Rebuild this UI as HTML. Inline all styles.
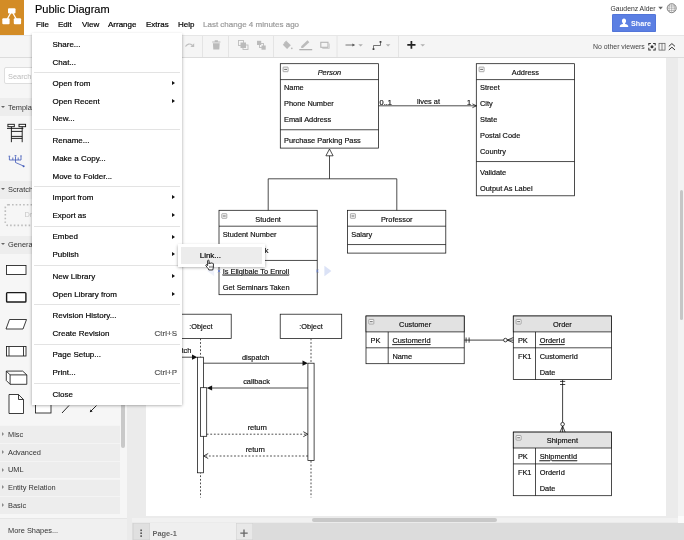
<!DOCTYPE html>
<html>
<head>
<meta charset="utf-8">
<title>Public Diagram</title>
<style>
html,body{margin:0;padding:0;}
#root{position:absolute;left:0;top:0;width:684px;height:540px;will-change:transform;overflow:hidden;}
body{width:684px;height:540px;position:relative;overflow:hidden;background:#fff;font-family:"Liberation Sans",sans-serif;color:#000;}
.abs{position:absolute;}
#logo{left:0;top:0;width:23.8px;height:35.5px;background:#d38c26;}
#title{left:35px;top:1px;font-size:11px;line-height:16px;color:#000;-webkit-text-stroke:0.15px;white-space:nowrap;}
#menubar{left:0;top:18px;height:13px;font-size:8px;line-height:13px;white-space:nowrap;color:#000;-webkit-text-stroke:0.2px;}
#menubar span{position:absolute;top:0;}
#toolbar{left:0;top:35px;width:684px;height:21px;background:#f5f5f5;border-top:1px solid #e6e6e6;border-bottom:1px solid #dcdcdc;}
#sidebar{left:0;top:58px;width:126.5px;height:482px;background:#f6f6f6;}
#canvas{left:132px;top:58px;width:552px;height:465px;background:#ebebeb;}
#page{left:146px;top:58px;width:520px;height:458px;background:#fff;}
#tabs{left:132px;top:523px;width:552px;height:17px;background:#dcdcdc;}
.sect{position:absolute;left:0;width:120px;height:17px;background:#ededed;font-size:7.4px;line-height:17px;color:#333;white-space:nowrap;}
.sect span{position:absolute;left:8px;top:0.6px;}
#menu{left:32px;top:33px;width:150px;height:372px;background:#fff;box-shadow:0 0.5px 3px rgba(0,0,0,.38);font-size:8px;color:#000;-webkit-text-stroke:0.18px #000;}
#menu .it{position:absolute;left:20.5px;white-space:nowrap;line-height:12px;}
#menu .sc{position:absolute;right:5px;white-space:nowrap;line-height:12px;color:#888;}
#menu .sep{position:absolute;left:2px;width:146px;height:1.3px;background:#e3e3e3;}
#menu .ar{position:absolute;left:139.8px;width:0;height:0;border-left:3.3px solid #111;border-top:2.8px solid transparent;border-bottom:2.8px solid transparent;}
#submenu{left:178.2px;top:243.7px;width:87px;height:23.3px;background:#fff;box-shadow:0 0.5px 3px rgba(0,0,0,.38);-webkit-text-stroke:0.18px #000;}
#submenu div{position:absolute;left:3px;top:3px;width:81px;height:17.5px;background:#ececec;font-size:8px;line-height:17.5px;}
#submenu span{position:absolute;left:18.5px;top:0.3px;}
svg text{font-family:"Liberation Sans",sans-serif;stroke:#111;stroke-width:0.18px;}

.sect i.td{position:absolute;left:1.300px;top:7.800px;width:0;height:0;border-top:2.800px solid #666;border-left:2.300px solid transparent;border-right:2.300px solid transparent;}
.sect i.tr{position:absolute;left:1.600px;top:6.800px;width:0;height:0;border-left:2.800px solid #888;border-top:2.300px solid transparent;border-bottom:2.300px solid transparent;}
</style>
</head>
<body>
<div id="root">
<div id="hdr" class="abs" style="left:0;top:0;width:684px;height:35px;background:#fff;"></div>
<div id="logo" class="abs"></div>
<svg class="abs" style="left:0;top:0" width="24" height="35" viewBox="0 0 24 35"><path d="M11.800 11l-5.600 10M11.800 11l5.500 10" stroke="#fff" stroke-width="1.300" fill="none"/><rect x="8" y="8.200" width="7.500" height="5.200" rx="1" fill="#fff"/><rect x="2.300" y="18.300" width="7.300" height="5.900" rx="1" fill="#fff"/><rect x="13.800" y="18.300" width="7.300" height="5.900" rx="1" fill="#fff"/></svg>
<div id="title" class="abs">Public Diagram</div>
<div id="menubar" class="abs">
<span style="left:36px">File</span><span style="left:58px">Edit</span><span style="left:82px">View</span><span style="left:108px">Arrange</span><span style="left:146px">Extras</span><span style="left:178px">Help</span><span style="left:203px;color:#9a9a9a">Last change 4 minutes ago</span>
</div>
<div id="toolbar" class="abs"></div>

<!-- header right -->
<div class="abs" style="left:610.500px;top:3.600px;font-size:6.800px;line-height:10px;color:#333;white-space:nowrap;">Gaudenz Alder</div>
<svg class="abs" style="left:656px;top:2px" width="26" height="14" viewBox="656 2 26 14">
<path d="M658.3 6.8h4.6l-2.3 2.8z" fill="#666"/>
<circle cx="671.7" cy="8.2" r="4.5" fill="#fff" stroke="#777" stroke-width="0.9"/>
<path d="M667.2 8.2h9M671.7 3.7v9M668 6h7.4M668 10.4h7.4M669.8 4.2c-1 2.6-1 5.4 0 8M673.6 4.2c1 2.6 1 5.4 0 8" fill="none" stroke="#8a8a8a" stroke-width="0.55"/>
</svg>
<div class="abs" style="left:612px;top:14px;width:44px;height:18px;background:#5b7fe3;border-radius:1.5px;box-shadow:inset 0 0 0 0.5px #4a6cd0;"></div>
<svg class="abs" style="left:618px;top:17px" width="12" height="12" viewBox="0 0 12 12"><path d="M6 1.6c1.3 0 2.1 1 2.1 2.3 0 1-.4 1.800-1 2.300v.7c1.700.4 3.100 1 3.100 2.200v.9H1.800v-.9c0-1.200 1.400-1.800 3.100-2.200v-.7c-.6-.5-1-1.300-1-2.300 0-1.300.8-2.300 2.100-2.300z" fill="#fff"/></svg>
<div class="abs" style="left:631px;top:17.600px;font-size:7.2px;font-weight:bold;line-height:12px;color:#fff;white-space:nowrap;">Share</div>

<!-- toolbar icons -->
<svg class="abs" style="left:180px;top:36px" width="504" height="21" viewBox="180 36 504 21">
<g stroke="#e4e4e4" stroke-width="1"><path d="M202.500 36v21M228.500 36v21M273.500 36v21M337 36v21M398.500 36v21"/></g>
<!-- redo -->
<path d="M185.500 46.500c1.500-2.800 4.500-3.300 6.800-1.200" fill="none" stroke="#bdbdbd" stroke-width="1.200"/><path d="M194.200 43.200v3.800h-3.800z" fill="#bdbdbd"/>
<!-- trash -->
<path d="M212.200 41.400h8.200v1.200h-8.200zM214.700 40.200h3.200v1.300h-3.200zM212.900 43.200h6.800l-.4 6.200h-6z" fill="#bbbbbb"/>
<!-- to front -->
<g fill="none" stroke="#bdbdbd" stroke-width="0.900"><rect x="238.500" y="40.500" width="5" height="5"/><rect x="243" y="45" width="5" height="4.500"/></g><rect x="240.500" y="42.500" width="5.500" height="5.500" fill="#bbbbbb"/>
<!-- to back -->
<rect x="259.500" y="43.500" width="4" height="4" fill="none" stroke="#bdbdbd" stroke-width="0.900"/><rect x="257" y="40.800" width="4.200" height="4.200" fill="#bbbbbb"/><rect x="261.500" y="45.500" width="4.200" height="4.200" fill="#bbbbbb"/>
<!-- fill -->
<path d="M286.500 41l4.300 4.300-3.700 3.700-4.300-4.300z" fill="#bbbbbb"/><path d="M284 43.200l2.500-2.500" stroke="#bbbbbb" stroke-width="0.800"/><circle cx="291.800" cy="48.300" r="0.900" fill="#bbbbbb"/>
<!-- line -->
<path d="M301.200 46.200l6.300-5.900 1.800 1.900-6.300 5.900h-1.800z" fill="#bbbbbb"/><rect x="299.300" y="49" width="12.900" height="1.300" fill="#b0b0b0"/>
<!-- shadow -->
<rect x="320.800" y="42.300" width="7.200" height="5" fill="none" stroke="#b4b4b4" stroke-width="1.100"/><path d="M322.300 48.500h7v-5" fill="none" stroke="#cfcfcf" stroke-width="1"/>
<!-- arrow -->
<path d="M345.500 45h7.500" stroke="#555" stroke-width="0.800"/><path d="M355.200 45l-2.800-1.600v3.200z" fill="#555"/>
<path d="M358.300 44.200h4.600l-2.300 2.400z" fill="#b0b0b0"/>
<!-- waypoint -->
<path d="M373.500 49v-3.500h7V42" fill="none" stroke="#555" stroke-width="0.800"/><rect x="372.600" y="48.200" width="1.800" height="1.800" fill="#444"/><rect x="379.600" y="41" width="1.800" height="1.800" fill="#444"/>
<path d="M385.800 44.200h4.600l-2.300 2.400z" fill="#b0b0b0"/>
<!-- plus -->
<path d="M407.300 44.900h8.200M411.400 41v7.800" stroke="#222" stroke-width="1.700"/>
<path d="M420.400 44.200h4.600l-2.300 2.400z" fill="#b0b0b0"/>
<!-- right icons -->
<g fill="#333"><path d="M648.300 43h2.600v1h-1.600v1.600h-1zM655.700 43h-2.600v1h1.600v1.600h1zM648.300 50.400h2.600v-1h-1.600v-1.600h-1zM655.700 50.400h-2.600v-1h1.600v-1.600h1z"/><circle cx="652" cy="46.700" r="1.500"/></g>
<rect x="659" y="43.300" width="6" height="6.800" fill="none" stroke="#555" stroke-width="0.700"/><path d="M662 43.300v6.800" stroke="#555" stroke-width="0.700"/>
<path d="M668.800 46.400l3.100-2.800 3.100 2.800M668.800 50l3.100-2.800 3.100 2.800" fill="none" stroke="#333" stroke-width="1"/>
</svg>
<div class="abs" style="left:593px;top:41px;font-size:6.900px;line-height:11px;color:#444;white-space:nowrap;">No other viewers</div>
<div id="sidebar" class="abs"></div>

<!-- sidebar contents -->
<div class="abs" style="left:4px;top:67px;width:113px;height:16.500px;background:#fff;border:1px solid #dedede;border-radius:2px;box-sizing:border-box;"></div>
<div class="abs" style="left:8px;top:70.600px;font-size:7.4px;line-height:12px;color:#bbb;white-space:nowrap;">Search Shapes</div>
<div class="sect" style="top:98px;height:18px;line-height:18px"><i class="td"></i><span>Templates</span></div>
<div class="sect" style="top:180.500px;height:18px;line-height:18px"><i class="td"></i><span>Scratchpad</span></div>
<div class="sect" style="top:235.500px;height:18px;line-height:18px"><i class="td"></i><span>General</span></div>
<svg class="abs" style="left:3px;top:202px" width="118" height="27" viewBox="3 202 118 27"><rect x="5.300" y="204.800" width="110.500" height="20.600" rx="3" fill="none" stroke="#bdbdbd" stroke-width="1.600" stroke-dasharray="1.600 2.100"/></svg>
<div class="abs" style="left:24.500px;top:209px;font-size:7.4px;line-height:12px;color:#c6c6c6;white-space:nowrap;">Drag elements here</div>
<div class="sect" style="top:425.40px;height:17.700px;line-height:17.700px;box-shadow:inset 0 0.700px 0 #f6f6f6"><i class="tr"></i><span>Misc</span></div>
<div class="sect" style="top:443.10px;height:17.700px;line-height:17.700px;box-shadow:inset 0 0.700px 0 #f6f6f6"><i class="tr"></i><span>Advanced</span></div>
<div class="sect" style="top:460.80px;height:17.700px;line-height:17.700px;box-shadow:inset 0 0.700px 0 #f6f6f6"><i class="tr"></i><span>UML</span></div>
<div class="sect" style="top:478.50px;height:17.700px;line-height:17.700px;box-shadow:inset 0 0.700px 0 #f6f6f6"><i class="tr"></i><span>Entity Relation</span></div>
<div class="sect" style="top:496.20px;height:17.700px;line-height:17.700px;box-shadow:inset 0 0.700px 0 #f6f6f6"><i class="tr"></i><span>Basic</span></div>
<div class="abs" style="left:0;top:517.500px;width:126.500px;height:22.500px;background:#f0f0f0;border-top:0.700px solid #e6e6e6;box-sizing:border-box;"></div>
<div class="abs" style="left:8px;top:524.700px;font-size:7.4px;line-height:12px;color:#333;white-space:nowrap;">More Shapes...</div>
<div class="abs" style="left:121.300px;top:58px;width:3.600px;height:389.500px;background:#c9c9c9;border-radius:2px;"></div>
<svg class="abs" style="left:0;top:118px" width="128" height="300" viewBox="0 118 128 300">
<g fill="none" stroke="#111" stroke-width="0.900">
<!-- template 1 -->
<rect x="7.900" y="124.300" width="6.400" height="2.400" fill="#fff"/><rect x="19" y="124.300" width="6.600" height="2.400" fill="#fff"/>
<path d="M11.400 126.700v15.500M22.200 126.700v15.500M7 128.400h16.300M11.400 131.400h10.800M11.400 136.400h10.800M11.400 138.400h10.800"/>
</g>
<g fill="none" stroke="#3d57b8" stroke-width="0.800">
<path d="M9.400 157v3h11.600v-3.500M15.500 156.500v6M12.800 157.500v2.500M18.200 157.500v2.500M15.500 162.500l7.500 3.300"/><circle cx="23.600" cy="166.200" r="1" fill="#3d57b8" stroke="none"/><path d="M8.600 156.300h1.600M14.600 155.800h1.800M20.200 156h1.600" stroke-width="1.100"/>
</g>
<g fill="#fff" stroke="#1a1a1a" stroke-width="0.850">
<rect x="6.500" y="265.500" width="19.500" height="9"/>
<rect x="6.600" y="292.600" width="19.300" height="9.400" rx="0.800" stroke-width="1.400"/>
<path d="M9.500 319.500h17l-3.500 9.500h-17z"/>
<rect x="6.500" y="346.500" width="19.500" height="9.500"/><path d="M9 346.500v9.500M23.500 346.500v9.500"/>
<path d="M6.300 371.100H22.700L26.800 374.900V384.300H10.100L6.300 380.500ZM6.300 371.100L10.100 374.900H26.800M10.100 374.900V384.300"/>
<path d="M9 394.500h9.500l5 5v14h-14.500zM18.500 394.500v5h5"/>
<rect x="35.500" y="396" width="15.500" height="17"/>
</g>
<path d="M62 413l7-7.500" stroke="#111" stroke-width="0.900"/>
<path d="M96.500 405.500l-6 6" stroke="#111" stroke-width="0.900"/><path d="M89.800 412.200l.8-2.800 2 2z" fill="#111"/>
</svg>
<div id="canvas" class="abs"></div>
<div id="page" class="abs"></div>
<div id="tabs" class="abs"></div>
<div class="abs" style="left:126.500px;top:58px;width:5.500px;height:482px;background:#ebebeb;"></div>
<div class="abs" style="left:678px;top:58px;width:6px;height:464px;background:#f3f3f3;"></div>
<div class="abs" style="left:679.500px;top:190px;width:3.800px;height:130px;background:#c6c6c6;border-radius:2px;"></div>
<div class="abs" style="left:132px;top:517.800px;width:546px;height:4px;background:#f1f1f1;"></div>
<div class="abs" style="left:678px;top:516px;width:6px;height:7px;background:#fbfbfb;"></div>
<div class="abs" style="left:312px;top:518px;width:185px;height:3.500px;background:#c8c8c8;border-radius:2px;"></div>
<div class="abs" style="left:132.500px;top:523px;width:17px;height:17px;background:#e0e0e0;box-shadow:inset 0 0 0 0.500px #cfcfcf;"></div>
<div class="abs" style="left:149.500px;top:523px;width:86px;height:17px;background:#efefef;"></div>
<div class="abs" style="left:235.500px;top:523px;width:17px;height:17px;background:#e8e8e8;box-shadow:inset 0 0 0 0.500px #cfcfcf;"></div>
<div class="abs" style="left:152.500px;top:527.800px;font-size:7.400px;font-weight:bold;line-height:12px;color:#666;white-space:nowrap;">Page-1</div>
<svg class="abs" style="left:132px;top:523px" width="122" height="17" viewBox="132 523 122 17"><g fill="#5a5a5a"><rect x="140.300" y="529.500" width="1.700" height="1.600"/><rect x="140.300" y="532.400" width="1.700" height="1.600"/><rect x="140.300" y="535.300" width="1.700" height="1.600"/></g><path d="M240.300 533.200h7.400M244 529.500v7.400" stroke="#666" stroke-width="1.300"/></svg>
<!--DIAGRAM-->
<svg class="abs" style="left:132px;top:58px" width="552" height="464" viewBox="132 58 552 464">
<g font-size="7.4" fill="#111">
<rect x="280.3" y="63.7" width="98.2" height="84.4" fill="#fff" stroke="#111" stroke-width="0.750"/>
<path d="M280.3 79.6h98.2M280.3 129.75h98.2" stroke="#111" stroke-width="0.750" fill="none"/>
<rect x="283.1" y="67.1" width="5" height="4.600" rx="0.500" fill="#f8f8f8" stroke="#888" stroke-width="0.700"/>
<path d="M284.2 69.4h2.800" stroke="#444" stroke-width="0.800"/>
<text x="329.4" y="74.95" text-anchor="middle" font-style="italic">Person</text>
<text x="284" y="90.4" text-anchor="start">Name</text>
<text x="284" y="106.3" text-anchor="start">Phone Number</text>
<text x="284" y="122.2" text-anchor="start">Email Address</text>
<text x="284" y="143" text-anchor="start">Purchase Parking Pass</text>
<rect x="476.3" y="63.7" width="98.2" height="132.1" fill="#fff" stroke="#111" stroke-width="0.750"/>
<path d="M476.3 79.6h98.2M476.3 161.55h98.2" stroke="#111" stroke-width="0.750" fill="none"/>
<rect x="479.1" y="67.1" width="5" height="4.600" rx="0.500" fill="#f8f8f8" stroke="#888" stroke-width="0.700"/>
<path d="M480.2 69.4h2.800" stroke="#444" stroke-width="0.800"/>
<text x="525.4" y="74.95" text-anchor="middle">Address</text>
<text x="480" y="90.4" text-anchor="start">Street</text>
<text x="480" y="106.3" text-anchor="start">City</text>
<text x="480" y="122.2" text-anchor="start">State</text>
<text x="480" y="138.1" text-anchor="start">Postal Code</text>
<text x="480" y="154" text-anchor="start">Country</text>
<text x="480" y="174.8" text-anchor="start">Validate</text>
<text x="480" y="190.7" text-anchor="start">Output As Label</text>
<rect x="219" y="210.3" width="98.2" height="84.4" fill="#fff" stroke="#111" stroke-width="0.750"/>
<path d="M219 226.2h98.2M219 260.45h98.2" stroke="#111" stroke-width="0.750" fill="none"/>
<rect x="221.8" y="213.7" width="5" height="4.600" rx="0.500" fill="#f8f8f8" stroke="#888" stroke-width="0.700"/>
<path d="M222.9 216h2.800" stroke="#444" stroke-width="0.800"/>
<text x="268.1" y="221.55" text-anchor="middle">Student</text>
<text x="222.7" y="237" text-anchor="start">Student Number</text>
<text x="222.7" y="252.9" text-anchor="start">Average Mark</text>
<text x="222.7" y="273.7" text-anchor="start" text-decoration="underline">Is Eligibale To Enroll</text>
<text x="222.7" y="289.6" text-anchor="start">Get Seminars Taken</text>
<rect x="347.6" y="210.3" width="98.2" height="42.8" fill="#fff" stroke="#111" stroke-width="0.750"/>
<path d="M347.6 226.2h98.2M347.6 244.55h98.2" stroke="#111" stroke-width="0.750" fill="none"/>
<rect x="350.4" y="213.7" width="5" height="4.600" rx="0.500" fill="#f8f8f8" stroke="#888" stroke-width="0.700"/>
<path d="M351.5 216h2.800" stroke="#444" stroke-width="0.800"/>
<text x="396.7" y="221.55" text-anchor="middle">Professor</text>
<text x="351.3" y="237" text-anchor="start">Salary</text>
<path d="M378.700 105.800H476.500" stroke="#111" stroke-width="0.750" fill="none"/>
<path d="M472.400 103.900L476.400 105.800L472.400 107.700" stroke="#111" stroke-width="0.750" fill="none"/>
<text x="379.6" y="104.5" text-anchor="start">0..1</text>
<text x="428.5" y="104.2" text-anchor="middle">lives at</text>
<text x="467" y="104.5" text-anchor="start">1</text>
<path d="M329.500 149L333.100 155.800H325.900Z" fill="#fff" stroke="#111" stroke-width="0.750"/>
<path d="M329.500 155.800V178.800M268.200 210.300V178.800H396.800V210.300" fill="none" stroke="#111" stroke-width="0.750"/>
<path d="M324.400 265.800L331.400 271L324.400 276.200Z" fill="#dbe2f6"/>
<path d="M214.200 265.800L207.200 271L214.200 276.200Z" fill="#eef1fb"/>
<path d="M217.800 269.800l2.400 2.400m0-2.400l-2.400 2.400M316.200 269.800l2.400 2.400m0-2.400l-2.400 2.400" stroke="#5a78d8" stroke-width="0.700" fill="none"/>
<path d="M200.500 338.500V497.500M311 338.500V497.500" stroke="#111" stroke-width="0.750" stroke-dasharray="1.800 1.800" fill="none"/>
<rect x="169.700" y="314.200" width="61.500" height="24.400" fill="#fff" stroke="#111" stroke-width="0.750"/>
<rect x="280.200" y="314.200" width="61.500" height="24.400" fill="#fff" stroke="#111" stroke-width="0.750"/>
<text x="200.9" y="329.2" text-anchor="middle">:Object</text>
<text x="311" y="329.2" text-anchor="middle">:Object</text>
<rect x="197.400" y="357.200" width="6.200" height="115.600" fill="#fff" stroke="#111" stroke-width="0.750"/>
<rect x="200.500" y="387.700" width="6.200" height="48.600" fill="#fff" stroke="#111" stroke-width="0.750"/>
<rect x="307.900" y="363.200" width="6.200" height="97.200" fill="#fff" stroke="#111" stroke-width="0.750"/>
<path d="M160 357.200H194" stroke="#111" stroke-width="0.750"/><path d="M197.400 357.200l-5.400-2.600v5.200z" fill="#111"/>
<text x="191.3" y="353.2" text-anchor="end">dispatch</text>
<path d="M203.600 363.200H304" stroke="#111" stroke-width="0.750"/><path d="M307.900 363.200l-5.400-2.600v5.200z" fill="#111"/>
<text x="255.7" y="359.7" text-anchor="middle">dispatch</text>
<path d="M307.900 388H210" stroke="#111" stroke-width="0.750"/><path d="M206.700 388l5.400-2.600v5.200z" fill="#111"/>
<text x="256.5" y="383.9" text-anchor="middle">callback</text>
<path d="M206.700 434.200H307" stroke="#111" stroke-width="0.750" stroke-dasharray="1.800 1.800"/><path d="M303.300 431.700l4.600 2.500-4.600 2.500" fill="none" stroke="#111" stroke-width="0.800"/>
<text x="257.3" y="430.2" text-anchor="middle">return</text>
<path d="M307.900 456H204.500" stroke="#111" stroke-width="0.750" stroke-dasharray="1.800 1.800"/><path d="M208.200 453.500l-4.600 2.500 4.600 2.500" fill="none" stroke="#111" stroke-width="0.800"/>
<text x="255.3" y="452" text-anchor="middle">return</text>
<rect x="366" y="316" width="98.2" height="47.7" fill="#fff" stroke="#111" stroke-width="0.750"/>
<rect x="366" y="316" width="98.2" height="15.9" fill="#e2e2e2" stroke="#111" stroke-width="0.750"/>
<path d="M388.2 331.9v31.8M366 347.8h98.2" stroke="#111" stroke-width="0.750" fill="none"/>
<rect x="368.8" y="319.4" width="5" height="4.600" rx="0.500" fill="#f8f8f8" stroke="#888" stroke-width="0.700"/>
<path d="M369.9 321.7h2.800" stroke="#444" stroke-width="0.800"/>
<text x="415.1" y="326.65" text-anchor="middle">Customer</text>
<text x="370.6" y="343.25" text-anchor="start">PK</text>
<text x="392.4" y="343.25" text-anchor="start" text-decoration="underline">CustomerId</text>
<text x="392.4" y="359.15" text-anchor="start">Name</text>
<rect x="513.3" y="316" width="98.2" height="63.6" fill="#fff" stroke="#111" stroke-width="0.750"/>
<rect x="513.3" y="316" width="98.2" height="15.9" fill="#e2e2e2" stroke="#111" stroke-width="0.750"/>
<path d="M535.5 331.9v47.7M513.3 347.8h98.2" stroke="#111" stroke-width="0.750" fill="none"/>
<rect x="516.1" y="319.4" width="5" height="4.600" rx="0.500" fill="#f8f8f8" stroke="#888" stroke-width="0.700"/>
<path d="M517.2 321.7h2.800" stroke="#444" stroke-width="0.800"/>
<text x="562.4" y="326.65" text-anchor="middle">Order</text>
<text x="517.9" y="343.25" text-anchor="start">PK</text>
<text x="539.7" y="343.25" text-anchor="start" text-decoration="underline">OrderId</text>
<text x="517.9" y="359.15" text-anchor="start">FK1</text>
<text x="539.7" y="359.15" text-anchor="start">CustomerId</text>
<text x="539.7" y="375.05" text-anchor="start">Date</text>
<rect x="513.3" y="432.1" width="98.2" height="63.6" fill="#fff" stroke="#111" stroke-width="0.750"/>
<rect x="513.3" y="432.1" width="98.2" height="15.9" fill="#e2e2e2" stroke="#111" stroke-width="0.750"/>
<path d="M535.5 448v47.7M513.3 463.9h98.2" stroke="#111" stroke-width="0.750" fill="none"/>
<rect x="516.1" y="435.5" width="5" height="4.600" rx="0.500" fill="#f8f8f8" stroke="#888" stroke-width="0.700"/>
<path d="M517.2 437.8h2.800" stroke="#444" stroke-width="0.800"/>
<text x="562.4" y="442.75" text-anchor="middle">Shipment</text>
<text x="517.9" y="459.35" text-anchor="start">PK</text>
<text x="539.7" y="459.35" text-anchor="start" text-decoration="underline">ShipmentId</text>
<text x="517.9" y="475.25" text-anchor="start">FK1</text>
<text x="539.7" y="475.25" text-anchor="start">OrderId</text>
<text x="539.7" y="491.15" text-anchor="start">Date</text>
<path d="M464.400 340.100H503.600M466.100 337.500v5.200M469.100 337.500v5.200M507.200 340.100H513.300M507.200 340.100L513.300 337.600M507.200 340.100L513.300 342.600" stroke="#111" stroke-width="0.800" fill="none"/>
<circle cx="505.400" cy="340.100" r="1.800" fill="#fff" stroke="#111" stroke-width="0.800"/>
<path d="M562.600 380V422.400M560 381.400h5.200M560 384.500h5.200M562.600 426V432.100M562.600 426L560.100 432.100M562.600 426L565.100 432.100" stroke="#111" stroke-width="0.800" fill="none"/>
<circle cx="562.600" cy="424.200" r="1.800" fill="#fff" stroke="#111" stroke-width="0.800"/>
</g>
</svg>
<!--/DIAGRAM-->
<!--MENU-->
<div id="menu" class="abs">
<div class="it" style="top:5.7px">Share...</div>
<div class="it" style="top:23.7px">Chat...</div>
<div class="it" style="top:44.7px">Open from</div>
<div class="ar" style="top:48.2px"></div>
<div class="it" style="top:62.7px">Open Recent</div>
<div class="ar" style="top:66.2px"></div>
<div class="it" style="top:80.2px">New...</div>
<div class="it" style="top:101.7px">Rename...</div>
<div class="it" style="top:119.7px">Make a Copy...</div>
<div class="it" style="top:137.7px">Move to Folder...</div>
<div class="it" style="top:158.7px">Import from</div>
<div class="ar" style="top:162.2px"></div>
<div class="it" style="top:176.7px">Export as</div>
<div class="ar" style="top:180.2px"></div>
<div class="it" style="top:198.2px">Embed</div>
<div class="ar" style="top:201.7px"></div>
<div class="it" style="top:215.7px">Publish</div>
<div class="ar" style="top:219.2px"></div>
<div class="it" style="top:237.7px">New Library</div>
<div class="ar" style="top:241.2px"></div>
<div class="it" style="top:255.7px">Open Library from</div>
<div class="ar" style="top:259.2px"></div>
<div class="it" style="top:276.7px">Revision History...</div>
<div class="it" style="top:294.7px">Create Revision</div>
<div class="sc" style="top:294.7px">Ctrl+S</div>
<div class="it" style="top:316.2px">Page Setup...</div>
<div class="it" style="top:333.7px">Print...</div>
<div class="sc" style="top:333.7px">Ctrl+P</div>
<div class="it" style="top:355.7px">Close</div>
<div class="sep" style="top:39px"></div>
<div class="sep" style="top:96px"></div>
<div class="sep" style="top:153px"></div>
<div class="sep" style="top:192.5px"></div>
<div class="sep" style="top:232px"></div>
<div class="sep" style="top:271px"></div>
<div class="sep" style="top:310.5px"></div>
<div class="sep" style="top:350px"></div>
</div>
<div id="submenu" class="abs"><div><span>Link...</span></div></div>
<svg class="abs" style="left:204.400px;top:258.900px" width="12" height="12.860" viewBox="0 0 14 15"><path d="M4.200 2.200c0-1.200 1.700-1.200 1.700 0v3.600l.3-.9c.3-.8 1.500-.6 1.500.3l.2-.3c.4-.7 1.500-.4 1.500.4l.2-.2c.5-.5 1.400-.1 1.400.7v3.600c0 1.600-.8 2-.8 3.400H5.600c0-.9-.8-1.800-1.700-2.800L2.300 8c-.7-.9.400-1.900 1.200-1.100l.7.800z" fill="#fff" stroke="#111" stroke-width="1" stroke-linejoin="round"/><path d="M6.600 8v2.600M8.100 8v2.600M9.600 8v2.600" stroke="#222" stroke-width="0.600"/></svg>
<!--/MENU-->
</div>
</body>
</html>
